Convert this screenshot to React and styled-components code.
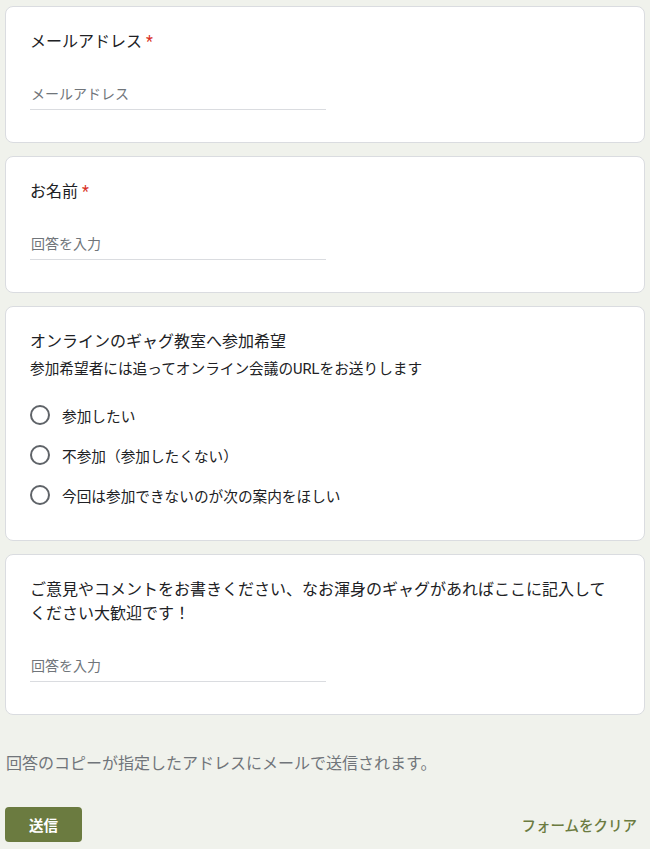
import styled, { createGlobalStyle } from 'styled-components';

const GlobalStyle = createGlobalStyle`
  html, body {
    margin: 0;
    padding: 0;
    background: #f0f2ec;
  }
  body {
    font-family: Roboto, "Noto Sans CJK JP", "Noto Sans", sans-serif;
    color: #202124;
  }
`;

const questions = [
  { id: 'email', title: 'メールアドレス', required: true, placeholder: 'メールアドレス' },
  { id: 'name', title: 'お名前', required: true, placeholder: '回答を入力' },
  {
    id: 'gag',
    title: 'オンラインのギャグ教室へ参加希望',
    description: '参加希望者には追ってオンライン会議のURLをお送りします',
    options: ['参加したい', '不参加（参加したくない）', '今回は参加できないのが次の案内をほしい'],
  },
  {
    id: 'comment',
    title: 'ご意見やコメントをお書きください、なお渾身のギャグがあればここに記入してください大歓迎です！',
    placeholder: '回答を入力',
  },
];

const App = () => {
  return (
    <>
      <GlobalStyle />
      <Page>
        {questions.map((q) => (
          <Card key={q.id}>
            <Title>
              {q.title}
              {q.required && <Star> *</Star>}
            </Title>
            {q.description && <Description>{q.description}</Description>}
            {q.options ? (
              <Options>
                {q.options.map((opt) => (
                  <Option key={opt}>
                    <Radio />
                    <span>{opt}</span>
                  </Option>
                ))}
              </Options>
            ) : (
              <Input placeholder={q.placeholder} />
            )}
          </Card>
        ))}
        <Notice>回答のコピーが指定したアドレスにメールで送信されます。</Notice>
        <Footer>
          <SubmitButton>送信</SubmitButton>
          <ClearButton>フォームをクリア</ClearButton>
        </Footer>
      </Page>
    </>
  );
};

export default App;

// Styled Components
const Page = styled.div`
  width: 640px;
  margin: 0 5px;
  padding-top: 6px;
  display: flex;
  flex-direction: column;
`;

const Card = styled.div`
  background: #fff;
  border: 1px solid #dadce0;
  border-radius: 8px;
  padding: 23px 36px 32px 24px;
  margin-bottom: 13px;
`;

const Title = styled.div`
  font-size: 16px;
  line-height: 24px;
  color: #202124;
`;

const Star = styled.span`
  color: #d93025;
`;

const Description = styled.div`
  font-size: 14.67px;
  line-height: 20px;
  margin-top: 5px;
`;

const Input = styled.input`
  display: block;
  width: 296px;
  height: 32px;
  margin-top: 24px;
  padding: 0 0 0 1px;
  border: none;
  border-bottom: 1px solid #dadce0;
  outline: none;
  font-family: inherit;
  font-size: 14px;
  box-sizing: border-box;

  &::placeholder {
    color: #70757a;
  }
`;

const Options = styled.div`
  margin-top: 16px;
  margin-bottom: -7px;
  display: flex;
  flex-direction: column;
`;

const Option = styled.label`
  display: flex;
  align-items: center;
  gap: 12px;
  height: 40px;
  font-size: 14.67px;
  color: #202124;
`;

const Radio = styled.span`
  width: 20px;
  height: 20px;
  box-sizing: border-box;
  border: 2px solid #5f6368;
  border-radius: 50%;
  flex-shrink: 0;
`;

const Notice = styled.div`
  margin-top: 24px;
  font-size: 16px;
  line-height: 24px;
  color: #70757a;
  padding-left: 1px;
`;

const Footer = styled.div`
  margin-top: 31px;
  display: flex;
  justify-content: space-between;
  align-items: center;
`;

const SubmitButton = styled.button`
  width: 77px;
  height: 35px;
  border: none;
  border-radius: 4px;
  background: #6b7b40;
  color: #fff;
  font-family: inherit;
  font-size: 14.5px;
  font-weight: bold;
`;

const ClearButton = styled.button`
  background: none;
  border: none;
  color: #6b7b40;
  font-family: inherit;
  font-size: 14.5px;
  font-weight: 500;
  padding: 0 8px;
`;
